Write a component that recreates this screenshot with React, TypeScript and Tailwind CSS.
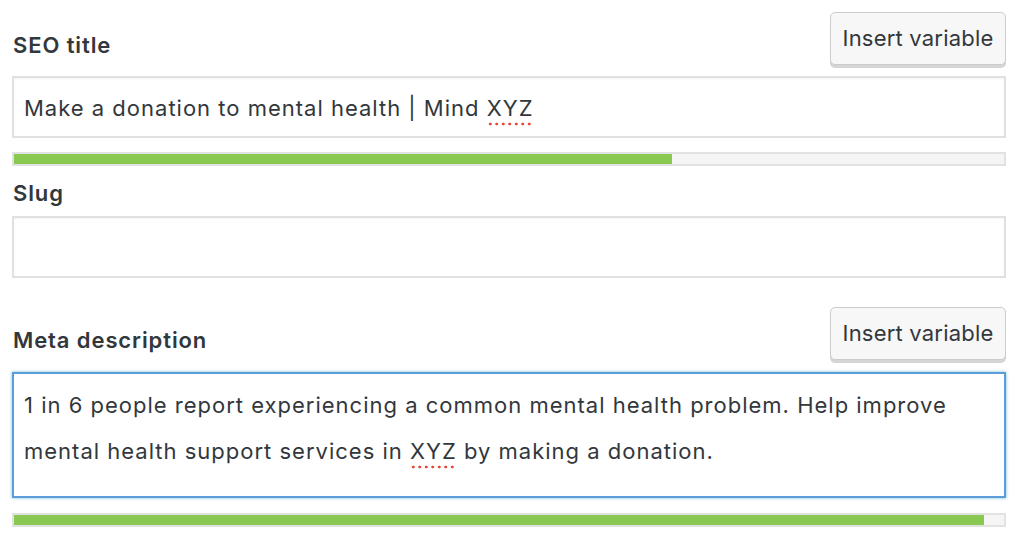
const fieldFont = { fontFamily: "Inter, 'Noto Sans', sans-serif" };

function InsertButton() {
  return (
    <button
      type="button"
      className="h-[53px] w-[176px] rounded-[5px] border border-[#cccccc] bg-[#f7f7f7] text-[22px] tracking-[0.2px] text-[#32373c] shadow-[0_3px_0_#d5d5d5]"
    >
      Insert variable
    </button>
  );
}

function ProgressBar({ percent }: { percent: number }) {
  return (
    <div className="h-[14px] w-full border-2 border-[#e2e2e2] bg-[#f5f5f5]">
      <div className="h-full bg-[#89c951]" style={{ width: `${percent}%` }} />
    </div>
  );
}

// spellcheck squiggle: a row of round red dots under the word
function Misspelled({ children }: { children: string }) {
  return (
    <span className="bg-[radial-gradient(circle,#e8463a_1.2px,transparent_1.7px)] bg-[length:6.5px_4px] bg-[position:0_100%] bg-repeat-x pb-[5px]">
      {children}
    </span>
  );
}

export default function App() {
  return (
    <div className="h-[546px] w-[1024px] bg-white pl-3 pr-[18px]" style={fieldFont}>
      <div className="flex items-end justify-between pt-3">
        <label className="pb-[3px] pl-px text-[22px] font-semibold tracking-[0.9px] text-[#32373c]">SEO title</label>
        <InsertButton />
      </div>

      <div className="mt-[11px] flex h-[62px] items-center border-2 border-[#e1e1e1] px-[10px] pt-[3px] text-[22px] tracking-[1px] text-[#32373c] shadow-[inset_0_1px_2px_rgba(0,0,0,0.05)]">
        <span>
          Make a donation to mental health | Mind <Misspelled>XYZ</Misspelled>
        </span>
      </div>

      <div className="mt-[14px]">
        <ProgressBar percent={66.5} />
      </div>

      <label className="mt-[13px] block pl-px text-[22px] font-semibold leading-[28px] tracking-[0.9px] text-[#32373c]">Slug</label>

      <div className="mt-[9px] h-[62px] border-2 border-[#e1e1e1] shadow-[inset_0_1px_2px_rgba(0,0,0,0.05)]" />

      <div className="mt-[29px] flex items-end justify-between">
        <label className="pb-[3px] pl-px text-[22px] font-semibold tracking-[0.9px] text-[#32373c]">Meta description</label>
        <InsertButton />
      </div>

      <div className="mt-[12px] h-[126px] border-2 border-[#5b9dd9] px-[10px] pt-[8px] text-[22px] leading-[46px] tracking-[1px] text-[#32373c] shadow-[0_0_3px_rgba(30,140,190,0.6)]">
        1 in 6 people report experiencing a common mental health problem. Help improve mental health support services in{" "}
        <Misspelled>XYZ</Misspelled> by making a donation.
      </div>

      <div className="mt-[15px]">
        <ProgressBar percent={98} />
      </div>
    </div>
  );
}
